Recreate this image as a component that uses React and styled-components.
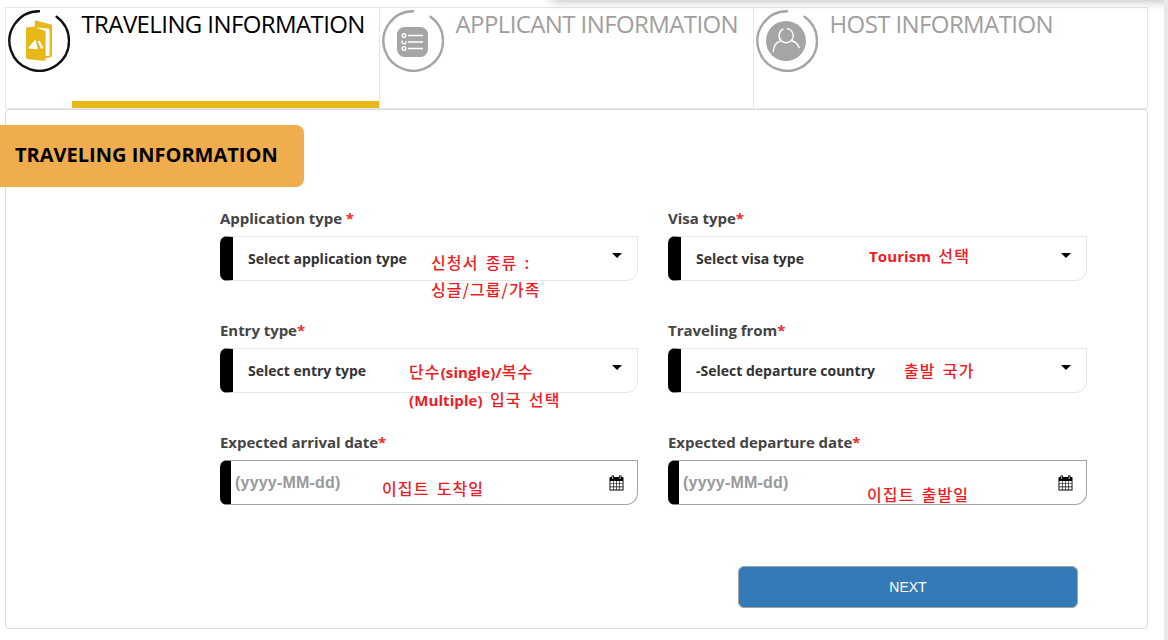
import React from 'react';
import styled, { createGlobalStyle } from 'styled-components';

const GlobalStyle = createGlobalStyle`
    * {
        box-sizing: border-box;
    }

    body {
        margin: 0;
        background-color: #fff;
        font-family: 'Open Sans', 'Noto Sans CJK KR', sans-serif;
    }
`

const Page = styled.div`
    position: relative;
    width: 1168px;
    height: 640px;
    padding: 7px 0 0 5px;
    border-right: 4px solid #e9e9e9;
    overflow: hidden;
`

const TopShadow = styled.div`
    position: absolute;
    top: -20px;
    left: 552px;
    right: -10px;
    height: 20px;
    box-shadow: 0 0 12px rgba(0, 0, 0, 0.32);
`

const Tabs = styled.div`
    display: grid;
    grid-template-columns: 374px 374px 394px;
    width: 1143px;
    height: 102px;
    border: solid #e7e7e7;
    border-width: 1px 1px 1px 0;
`

const Tab = styled.div`
    display: flex;
    border-left: 1px solid #e7e7e7;
    padding: 2px 0 0 2px;
    color: ${props => props.$active ? '#000' : '#a09e9e'};

    svg {
        flex: none;
    }
`

const TabTitle = styled.div`
    flex: 1;
    height: 98px;
    margin-left: 2px;
    padding-left: 9.5px;
    border-bottom: 7px solid ${props => props.$active ? '#e8b71a' : 'transparent'};
    font-size: 24px;
    font-weight: 400;
    line-height: 28px;
    letter-spacing: -0.6px;
    white-space: nowrap;
`

const Panel = styled.div`
    width: 1143px;
    height: 520px;
    padding-top: 15px;
    border: 1px solid #dcdcdc;
    border-radius: 4px;
`

const Badge = styled.h2`
    width: 304px;
    height: 62px;
    margin: 0 0 21px -6px;
    padding-left: 15px;
    border-radius: 0 8px 8px 0;
    background-color: #f0ad4e;
    color: #000;
    font-size: 20px;
    font-weight: 700;
    line-height: 60px;
    white-space: nowrap;
`

const Fields = styled.div`
    display: grid;
    grid-template-columns: 418px 419px;
    column-gap: 30px;
    row-gap: 39px;
    margin-left: 214px;
`

const Label = styled.div`
    height: 20px;
    margin-bottom: 8px;
    color: #444;
    font-size: 15px;
    font-weight: 700;
    line-height: 20px;
    letter-spacing: -0.05px;
    white-space: nowrap;

    span {
        color: #ee2a2f;
    }
`

const Control = styled.div`
    position: relative;
    display: flex;
    align-items: center;
    justify-content: space-between;
    height: 45px;
    border: 1px solid ${props => props.$date ? '#a3a3a3' : '#e7e7e7'};
    border-left: ${props => props.$date ? '11px' : '13px'} solid #000;
    border-radius: 7px 0 12px 7px;
    padding: ${props => props.$date ? '0 13px 0 4px' : '0 15px'};
`

const Value = styled.div`
    color: #333;
    font-size: 14px;
    font-weight: 700;
    white-space: nowrap;
`

const Placeholder = styled.div`
    color: #999;
    font-family: 'Liberation Sans', sans-serif;
    font-size: 16px;
    font-weight: 700;
    letter-spacing: 0.2px;
`

const Arrow = styled.div`
    margin-top: -6px;
    border: solid transparent;
    border-width: 5px 5px 0 5px;
    border-top-color: #000;
`

// hints that lie over the inputs
const Note = styled.div`
    position: absolute;
    top: ${props => props.$top}px;
    left: ${props => props.$left}px;
    color: #ed1c24;
    font-family: 'Noto Sans CJK KR', sans-serif;
    font-size: 16px;
    font-weight: 500;
    line-height: 27px;
    letter-spacing: 1.1px;
    word-spacing: 2.5px;
    white-space: pre;

    b {
        font-family: 'Open Sans', sans-serif;
        font-size: 15px;
        letter-spacing: 0.1px;
    }
`

const NextButton = styled.button`
    display: block;
    width: 340px;
    height: 42px;
    margin: 61px 0 0 732px;
    border: 1px solid #a3a3a3;
    border-radius: 6px;
    background-color: #337ab7;
    color: #fff;
    font-family: 'Liberation Sans', sans-serif;
    font-size: 14px;
`

const Ring = ({ color, children }) => (
    <svg width="62" height="62" viewBox="0 0 62 62" fill="none">
        <path d="M31 1.2 A29.8 29.8 0 1 0 48.6 6.8" stroke={color} strokeWidth="2.4" strokeLinecap="round" />
        {children}
    </svg>
)

const TravelIcon = () => (
    <Ring color="#111">
        <path d="M18 19 Q18 17.6 19.5 17.3 L26.8 16.8 V10.2 L43 14.6 Q44 15 44 16.2 V45 Q44 47.2 42 47.5 L37.6 48 V49.5 Q37.6 51 36 50.8 L20 49.2 Q18 49 18 47.2Z" fill="#e8b71a" />
        <path d="M27.5 17.4 L39.8 18.6 Q41.6 18.9 41.6 20.6 V44.4 Q41.6 45.8 40.2 45.9 L37.6 46 V22.6 Q37.6 21 36.2 20.5Z" fill="#fff" />
        <path d="M20.7 38 L27.2 30.2 L29.2 38.8Z" fill="#fff" stroke="#fff" strokeLinejoin="round" />
        <path d="M30.6 31 L34.4 38.4" stroke="#fff" strokeWidth="2.2" />
    </Ring>
)

const ListIcon = () => (
    <Ring color="#a6a4a4">
        <rect x="15" y="17" width="31" height="30" rx="7.5" fill="#a6a4a4" />
        <g stroke="#fff" strokeWidth="1.4">
            <circle cx="22" cy="25.5" r="1.8" />
            <path d="M20.4 30.6 A1.9 1.9 0 0 0 22 33.8 A1.9 1.9 0 0 0 23.8 31" />
            <circle cx="22" cy="38.4" r="1.8" />
            <path d="M26 25.5 H41 M26 32 H41 M26 38.4 H41" strokeWidth="1.5" />
        </g>
    </Ring>
)

const PersonIcon = () => (
    <Ring color="#a6a4a4">
        <circle cx="30" cy="31" r="20" fill="#a6a4a4" />
        <g stroke="#fff" strokeWidth="1.4" strokeLinecap="round">
            <path d="M27 19.2 A7.1 7.1 0 1 0 31.5 18.6" />
            <path d="M17.3 41.5 C17.7 36 20.5 32 25 30.8 M35.7 30.8 C39.5 31.8 42 34.5 43.2 37.7" />
        </g>
    </Ring>
)

const Calendar = () => (
    <svg width="15" height="16" viewBox="0 0 15 16">
        <path d="M0.5 3 Q0.5 2 1.5 2 H13.5 Q14.5 2 14.5 3 V15.5 H0.5Z" fill="#000" />
        <path d="M2.5 0.5 H5 V4 H2.5Z M10 0.5 H12.5 V4 H10Z" fill="#000" />
        <path d="M3.7 1.3 V4 M11.2 1.3 V4" stroke="#fff" strokeWidth="0.8" />
        <path d="M1.4 6h2.6v2.5H1.4z M4.6 6h2.6v2.5H4.6z M7.8 6h2.6v2.5H7.8z M11 6h2.6v2.5H11z M1.4 9.1h2.6v2.5H1.4z M4.6 9.1h2.6v2.5H4.6z M7.8 9.1h2.6v2.5H7.8z M11 9.1h2.6v2.5H11z M1.4 12.2h2.6v2.4H1.4z M4.6 12.2h2.6v2.4H4.6z M7.8 12.2h2.6v2.4H7.8z M11 12.2h2.6v2.4H11z" fill="#fff" />
    </svg>
)

const Field = ({ label, value, date, children }) => (
    <div>
        <Label>{label}<span>*</span></Label>
        <Control $date={date}>
            {date ? <Placeholder>(yyyy-MM-dd)</Placeholder> : <Value>{value}</Value>}
            {date ? <Calendar /> : <Arrow />}
            {children}
        </Control>
    </div>
)

const App = () => {
    return (
        <>
            <GlobalStyle />
            <Page>
                <TopShadow />
                <Tabs>
                    <Tab $active>
                        <TravelIcon />
                        <TabTitle $active>TRAVELING INFORMATION</TabTitle>
                    </Tab>
                    <Tab>
                        <ListIcon />
                        <TabTitle>APPLICANT INFORMATION</TabTitle>
                    </Tab>
                    <Tab>
                        <PersonIcon />
                        <TabTitle>HOST INFORMATION</TabTitle>
                    </Tab>
                </Tabs>
                <Panel>
                    <Badge>TRAVELING INFORMATION</Badge>
                    <Fields>
                        <Field label="Application type " value="Select application type">
                            <Note $top={12} $left={198}>신청서 종류 :{'\n'}싱글/그룹/가족</Note>
                        </Field>
                        <Field label="Visa type" value="Select visa type">
                            <Note $top={5} $left={188}><b>Tourism</b> 선택</Note>
                        </Field>
                        <Field label="Entry type" value="Select entry type">
                            <Note $top={9} $left={176}>단수<b>(single)/</b>복수{'\n'}<b>(Multiple)</b> 입국 선택</Note>
                        </Field>
                        <Field label="Traveling from" value="-Select departure country">
                            <Note $top={8} $left={223}>출발 국가</Note>
                        </Field>
                        <Field label="Expected arrival date" date>
                            <Note $top={14} $left={151}>이집트 도착일</Note>
                        </Field>
                        <Field label="Expected departure date" date>
                            <Note $top={20} $left={188}>이집트 출발일</Note>
                        </Field>
                    </Fields>
                    <NextButton>NEXT</NextButton>
                </Panel>
            </Page>
        </>
    )
}
export default App;
